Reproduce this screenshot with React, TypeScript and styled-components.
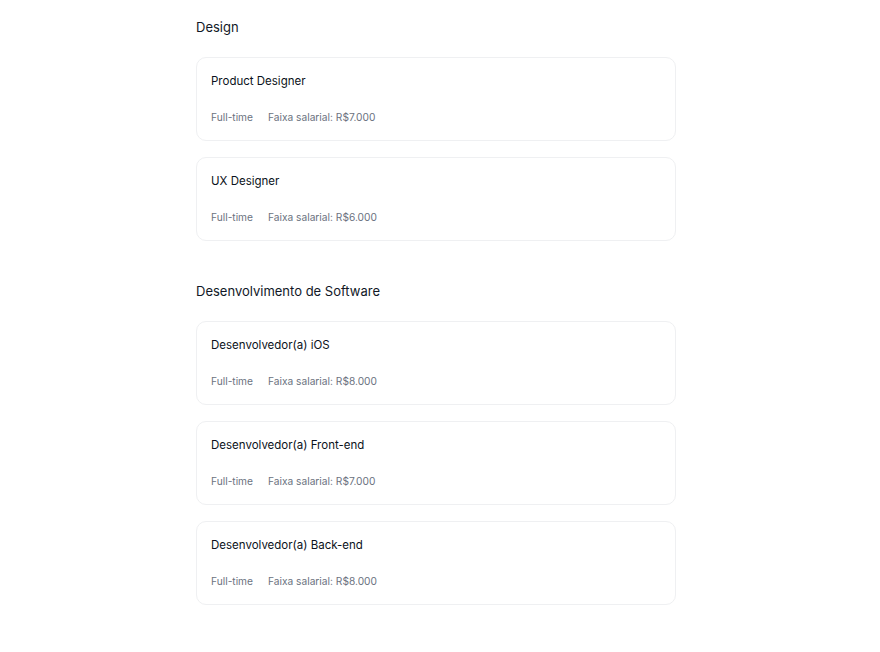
import React from "react";
import styled, { createGlobalStyle } from "styled-components";

const Global = createGlobalStyle`
  html, body { margin: 0; padding: 0; background: #ffffff; }
  body { font-family: Inter, "Noto Sans", sans-serif; -webkit-font-smoothing: antialiased; }
`;

const Page = styled.main`
  width: 480px;
  margin-left: calc(50% - 244px);
  padding: 18px 0 40px;
  display: flex;
  flex-direction: column;
  gap: 41px;
`;

const Section = styled.section`
  display: flex;
  flex-direction: column;
`;

const SectionTitle = styled.h2`
  margin: 0 0 21px;
  font-size: 13px;
  line-height: 18px;
  font-weight: 400;
  color: #111827;
`;

const List = styled.div`
  display: flex;
  flex-direction: column;
  gap: 16px;
`;

const Card = styled.article`
  border: 1px solid #eff0f2;
  border-radius: 10px;
  padding: 15px 14px;
  display: flex;
  flex-direction: column;
  gap: 20px;
  background: #fff;
`;

const JobTitle = styled.h3`
  margin: 0;
  font-size: 11.5px;
  line-height: 16px;
  font-weight: 400;
  color: #0b1220;
`;

const Meta = styled.div`
  display: flex;
  gap: 15px;
  font-size: 10.2px;
  line-height: 16px;
  color: #6b7280;
`;

type Job = { title: string; type: string; salary: string };

const sections: { name: string; jobs: Job[] }[] = [
  {
    name: "Design",
    jobs: [
      { title: "Product Designer", type: "Full-time", salary: "R$7.000" },
      { title: "UX Designer", type: "Full-time", salary: "R$6.000" },
    ],
  },
  {
    name: "Desenvolvimento de Software",
    jobs: [
      { title: "Desenvolvedor(a) iOS", type: "Full-time", salary: "R$8.000" },
      { title: "Desenvolvedor(a) Front-end", type: "Full-time", salary: "R$7.000" },
      { title: "Desenvolvedor(a) Back-end", type: "Full-time", salary: "R$8.000" },
    ],
  },
];

export default function App() {
  return (
    <>
      <Global />
      <Page>
        {sections.map((s) => (
          <Section key={s.name}>
            <SectionTitle>{s.name}</SectionTitle>
            <List>
              {s.jobs.map((j) => (
                <Card key={j.title}>
                  <JobTitle>{j.title}</JobTitle>
                  <Meta>
                    <span>{j.type}</span>
                    <span>Faixa salarial: {j.salary}</span>
                  </Meta>
                </Card>
              ))}
            </List>
          </Section>
        ))}
      </Page>
    </>
  );
}
